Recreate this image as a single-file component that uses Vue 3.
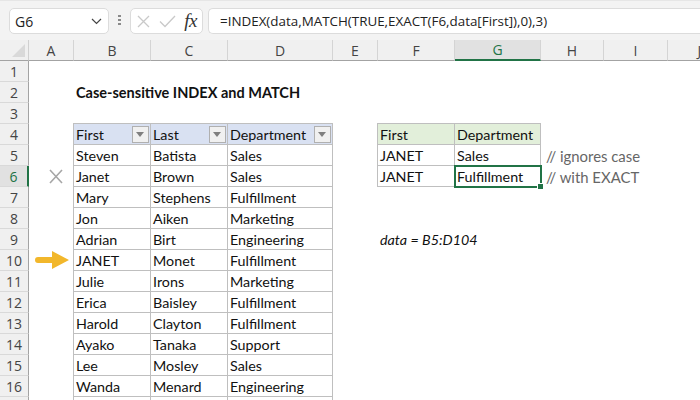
<script setup>
const letters = ['A', 'B', 'C', 'D', 'E', 'F', 'G', 'H', 'I', 'J']

const tableRows = [
  ['Steven', 'Batista', 'Sales'],
  ['Janet', 'Brown', 'Sales'],
  ['Mary', 'Stephens', 'Fulfillment'],
  ['Jon', 'Aiken', 'Marketing'],
  ['Adrian', 'Birt', 'Engineering'],
  ['JANET', 'Monet', 'Fulfillment'],
  ['Julie', 'Irons', 'Marketing'],
  ['Erica', 'Baisley', 'Fulfillment'],
  ['Harold', 'Clayton', 'Fulfillment'],
  ['Ayako', 'Tanaka', 'Support'],
  ['Lee', 'Mosley', 'Sales'],
  ['Wanda', 'Menard', 'Engineering'],
  ['', '', '']
]

function cellsFor(r) {
  const c = {}
  if (r === 2) c.B = { text: 'Case-sensitive INDEX and MATCH', cls: 'title' }
  if (r === 4) {
    c.B = { text: 'First', cls: 'tb head', filter: true }
    c.C = { text: 'Last', cls: 'tb head', filter: true }
    c.D = { text: 'Department', cls: 'tb head', filter: true }
    c.F = { text: 'First', cls: 'tb green' }
    c.G = { text: 'Department', cls: 'tb green' }
  }
  if (r >= 5) {
    const t = tableRows[r - 5]
    c.B = { text: t[0], cls: 'tb' }
    c.C = { text: t[1], cls: 'tb' }
    c.D = { text: t[2], cls: 'tb' }
  }
  if (r === 5) {
    c.F = { text: 'JANET', cls: 'tb' }
    c.G = { text: 'Sales', cls: 'tb' }
    c.H = { text: '// ignores case', cls: 'note' }
  }
  if (r === 6) {
    c.F = { text: 'JANET', cls: 'tb' }
    c.G = { text: 'Fulfillment', cls: 'tb', active: true }
    c.H = { text: '// with EXACT', cls: 'note' }
  }
  if (r === 9) c.F = { text: 'data = B5:D104', cls: 'ital' }
  return letters.map((l) => ({ key: l, ...(c[l] || { text: '', cls: '' }) }))
}

const rows = Array.from({ length: 17 }, (_, i) => ({ n: i + 1, cells: cellsFor(i + 1) }))
</script>

<template>
  <div class="app">
    <div class="bar">
      <div class="namebox">
        <span>G6</span>
        <svg width="11" height="7" viewBox="0 0 11 7"><path d="M1 1l4.5 4.5L10 1" fill="none" stroke="#444" stroke-width="1.2" /></svg>
      </div>
      <div class="dots"><i></i><i></i><i></i></div>
      <div class="btns">
        <svg width="13" height="13" viewBox="0 0 13 13"><path d="M1 1l11 11M12 1L1 12" fill="none" stroke="#c9c9c9" stroke-width="1.3" /></svg>
        <svg width="17" height="13" viewBox="0 0 17 13"><path d="M1 6.5l5 5L16 1" fill="none" stroke="#c9c9c9" stroke-width="1.3" /></svg>
        <span class="fx">fx</span>
      </div>
      <div class="formula">=INDEX(data,MATCH(TRUE,EXACT(F6,data[First]),0),3)</div>
    </div>

    <div class="sheet">
      <div class="corner"><b></b></div>
      <div v-for="l in letters" :key="l" class="colhead" :class="{ on: l === 'G' }">{{ l }}</div>
      <template v-for="row in rows" :key="row.n">
        <div class="rowhead" :class="{ on: row.n === 6 }">{{ row.n === 17 ? '' : row.n }}</div>
        <div v-for="cell in row.cells" :key="cell.key" class="cell" :class="cell.cls">
          <span class="txt">{{ cell.text }}</span>
          <span v-if="cell.filter" class="filter"><b></b></span>
          <span v-if="cell.active" class="active"><b></b></span>
        </div>
      </template>
    </div>

    <svg class="mark-x" width="14" height="15" viewBox="0 0 14 15"><path d="M1 1l12 13M13 1L1 14" fill="none" stroke="#a6a6a6" stroke-width="1.6" /></svg>
    <svg class="mark-arrow" width="35" height="18" viewBox="0 0 35 18"><path d="M3 6h14V0l17 9-17 9v-6H3a3 3 0 0 1 0-6z" fill="#f2b72b" /></svg>
  </div>
</template>

<style scoped>
.app {
  position: relative;
  width: 700px;
  height: 400px;
  overflow: hidden;
  background: #fff;
  font-family: Lato, "Liberation Sans", sans-serif;
  color: #111;
}
.bar {
  box-sizing: border-box;
  height: 40px;
  display: flex;
  align-items: flex-start;
  padding-top: 7px;
  padding-left: 9px;
  background: #f3f3f3;
  border-top: 1px solid #e6e6e6;
}
.namebox,
.btns,
.formula {
  box-sizing: border-box;
  height: 26px;
  background: #fff;
  border: 1px solid #dcdcdc;
  border-radius: 5px;
  display: flex;
  align-items: center;
}
.namebox {
  width: 100px;
  padding: 0 6px 0 5px;
  justify-content: space-between;
  font: 14px "Open Sans", sans-serif;
  color: #222;
}
.dots {
  width: 21px;
  display: flex;
  flex-direction: column;
  align-items: center;
  gap: 2px;
  padding-top: 7px;
}
.dots i {
  width: 3px;
  height: 2px;
  background: #8a8a8a;
}
.btns {
  width: 73px;
  padding: 0 5px 0 6px;
  justify-content: space-between;
}
.fx {
  font: italic 19px "Liberation Serif", serif;
  color: #333;
  letter-spacing: -0.5px;
}
.formula {
  flex: 1;
  margin-left: 5px;
  padding-left: 11px;
  border-right: 0;
  border-radius: 5px 0 0 5px;
  font: 13.4px "Open Sans", sans-serif;
  color: #222;
}
.sheet {
  display: grid;
  grid-template-columns: 29px 45px 77px 77px 105px 45px 77px 86px 63px 64px 64px;
  grid-auto-rows: 21px;
  font-size: 14.3px;
}
.corner,
.colhead {
  box-sizing: border-box;
  background: #f0f0f0;
  border-bottom: 1px solid #a3a3a3;
}
.corner {
  position: relative;
  border-right: 1px solid #d0d0d0;
}
.corner b {
  position: absolute;
  right: 3px;
  bottom: 3px;
  border-style: solid;
  border-width: 0 0 13px 13px;
  border-color: transparent transparent #d9d9d9 transparent;
}
.colhead {
  display: flex;
  align-items: center;
  justify-content: center;
  border-right: 1px solid #d4d4d4;
  color: #444;
  font: 14px "Open Sans", sans-serif;
}
.colhead.on {
  background: #e1e1e1;
  color: #217346;
  border-bottom: 2px solid #217346;
}
.rowhead {
  box-sizing: border-box;
  display: flex;
  align-items: center;
  justify-content: center;
  background: #f0f0f0;
  border-right: 1px solid #a3a3a3;
  border-bottom: 1px solid #d9d9d9;
  color: #444;
  font: 14px "Open Sans", sans-serif;
}
.rowhead.on {
  background: #e1e1e1;
  color: #217346;
  border-right: 2px solid #217346;
}
.cell {
  position: relative;
  display: flex;
  align-items: center;
  white-space: nowrap;
  min-width: 0;
}
.txt {
  padding-left: 2px;
}
.tb {
  box-sizing: content-box;
  margin: -1px 0 0 -1px;
  border: 1px solid #bfbfbf;
  height: 20px;
}
.head {
  background: #d9e1f2;
}
.green {
  background: #e2efda;
}
.title {
  font-weight: 700;
  font-size: 14.5px;
}
.note {
  color: #666;
  font-size: 14.9px;
  padding-left: 3px;
}
.ital {
  font-style: italic;
}
.filter {
  position: absolute;
  right: 1px;
  top: 2px;
  box-sizing: border-box;
  width: 17px;
  height: 17px;
  background: #f0f0f0;
  border: 1px solid #b0b0b0;
}
.filter b {
  position: absolute;
  left: 3px;
  top: 5px;
  border-style: solid;
  border-width: 5px 4px 0;
  border-color: #7f7f7f transparent transparent;
}
.active {
  position: absolute;
  left: -1px;
  top: -1px;
  right: -2px;
  bottom: -2px;
  border: 2px solid #217346;
}
.active b {
  position: absolute;
  right: -3px;
  bottom: -3px;
  width: 5px;
  height: 5px;
  background: #217346;
  outline: 1px solid #fff;
}
.mark-x {
  position: absolute;
  left: 49px;
  top: 169px;
}
.mark-arrow {
  position: absolute;
  left: 35px;
  top: 251px;
}
</style>
